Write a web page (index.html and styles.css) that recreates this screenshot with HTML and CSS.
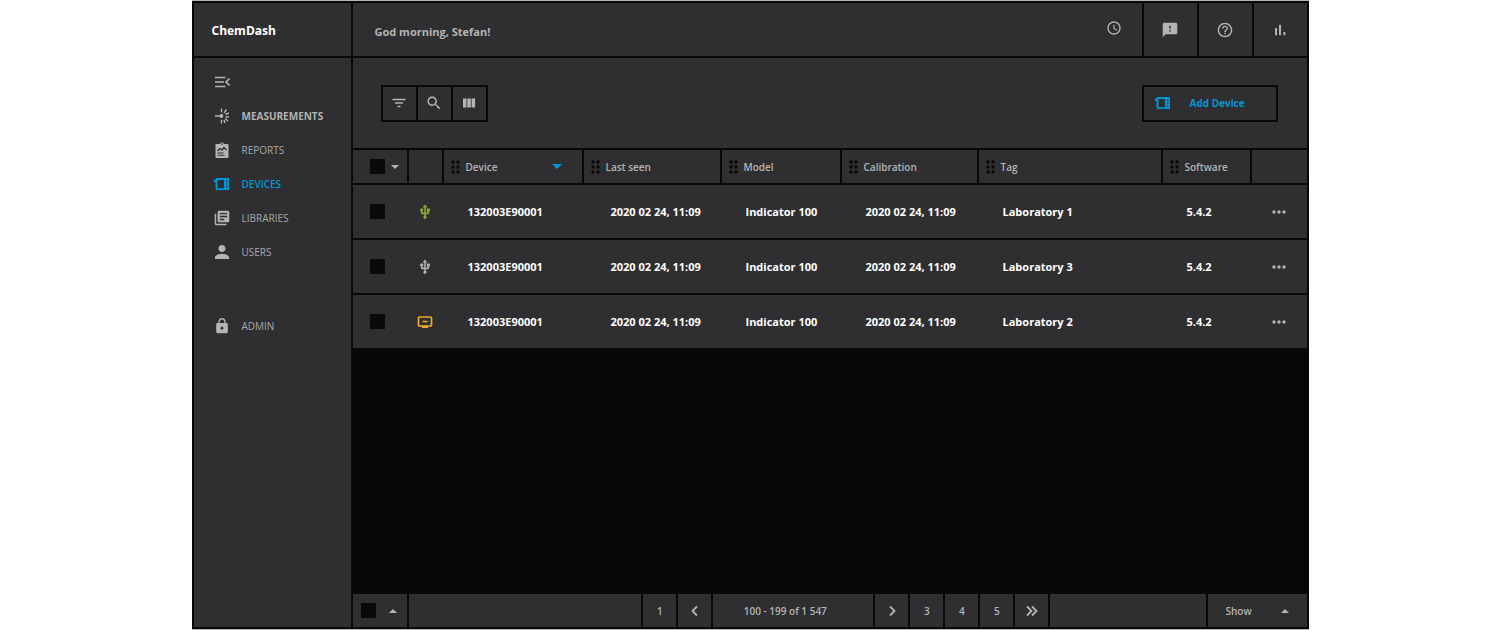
FILE: index.html
```html
<!DOCTYPE html>
<html lang="en">
<head>
<meta charset="utf-8">
<meta name="viewport" content="width=device-width, initial-scale=1">
<title>ChemDash – Devices</title>
<link rel="stylesheet" href="styles.css">
</head>
<body>
<svg class="sprite" aria-hidden="true">
  <symbol id="device" viewBox="0 0 16 14"><path fill="currentColor" fill-rule="evenodd" d="M2 1h13v12H2v-1.500H1.500V5H0V2.500h2zM3.500 3v8.300H10V3z"/><path d="M12.700 3.500v1.500M12.700 6.300v1.500M12.700 9.100v1.500" stroke="#2f2f31" stroke-width="1.200"/></symbol>
  <symbol id="usb" viewBox="0 0 24 24"><path fill="currentColor" stroke="currentColor" stroke-width=".6" d="M15 7v4h1v2h-3V5h2l-3-4-3 4h2v8H8v-2.070c.7-.37 1.200-1.080 1.200-1.930 0-1.210-.99-2.200-2.200-2.200S4.800 7.790 4.800 9c0 .85.5 1.560 1.200 1.930V13c0 1.110.89 2 2 2h3v3.050c-.71.37-1.200 1.100-1.200 1.950 0 1.220.99 2.200 2.200 2.200s2.200-.98 2.200-2.200c0-.85-.49-1.580-1.200-1.950V15h3c1.110 0 2-.89 2-2v-2h1V7h-4z"/></symbol>
  <symbol id="grip" viewBox="0 0 9 14"><g fill="currentColor"><circle cx="2" cy="2" r="1.700"/><circle cx="7" cy="2" r="1.700"/><circle cx="2" cy="7" r="1.700"/><circle cx="7" cy="7" r="1.700"/><circle cx="2" cy="12" r="1.700"/><circle cx="7" cy="12" r="1.700"/></g></symbol>
  <symbol id="down" viewBox="0 0 8 4"><path fill="currentColor" d="M0 0h8L4 4z"/></symbol>
  <symbol id="up" viewBox="0 0 8 4"><path fill="currentColor" d="M0 4h8L4 0z"/></symbol>
  <symbol id="more" viewBox="0 0 14 4"><g fill="currentColor"><circle cx="2" cy="2" r="1.700"/><circle cx="7" cy="2" r="1.700"/><circle cx="12" cy="2" r="1.700"/></g></symbol>
</svg>

<div class="app">
  <div class="brand">ChemDash</div>

  <header class="topbar">
    <div class="greeting">
      <span>God morning, Stefan!</span>
      <button class="history" aria-label="History"><svg class="icon" viewBox="0 0 24 24"><path fill="currentColor" d="M11.990 2C6.470 2 2 6.480 2 12s4.470 10 9.990 10C17.520 22 22 17.520 22 12S17.520 2 11.990 2zM12 20c-4.420 0-8-3.580-8-8s3.580-8 8-8 8 3.580 8 8-3.580 8-8 8zm.8-13H11v6l5 3.300 1-1.500-4.200-2.600z"/></svg></button>
    </div>
    <button class="top-button" aria-label="Feedback"><svg class="icon" viewBox="1 1 22 22"><path fill="currentColor" d="M20 2H4c-1.100 0-2 .9-2 2v18l4-4h14c1.100 0 2-.9 2-2V4c0-1.100-.9-2-2-2zm-7 12h-2v-2h2v2zm0-4h-2V6h2v4z"/></svg></button>
    <button class="top-button" aria-label="Help"><svg class="icon" viewBox="1 1 22 22"><path fill="currentColor" d="M11 18h2v-2h-2v2zm1-16C6.480 2 2 6.480 2 12s4.480 10 10 10 10-4.480 10-10S17.520 2 12 2zm0 18c-4.410 0-8-3.590-8-8s3.590-8 8-8 8 3.590 8 8-3.590 8-8 8zm0-14c-2.210 0-4 1.790-4 4h2c0-1.100.9-2 2-2s2 .9 2 2c0 2-3 1.750-3 5h2c0-2.250 3-2.500 3-5 0-2.210-1.790-4-4-4z"/></svg></button>
    <button class="top-button" aria-label="Statistics"><svg class="icon" viewBox="0 0 24 24"><path fill="currentColor" d="M4.500 9h3v11h-3zM10.500 4h3v16h-3zM17 15h3v5h-3z"/></svg></button>
  </header>

  <nav class="sidebar" aria-label="Main">
    <button class="nav-item" aria-label="Collapse menu"><svg class="icon" viewBox="0 0 16 16"><path d="M1 3.500h10.500M1 8h9M1 12.500h10.500M15.500 4.500 12 8l3.500 3.500" fill="none" stroke="currentColor" stroke-width="1.700"/></svg></button>
    <a class="nav-item strong" href="#measurements"><svg class="icon" viewBox="0 0 16 16"><path d="M1 8h6M7.500.5v3.800M7.500 11.700v3.800M12.500 1.500 10 5M15 5l-3.500 1.500M11.500 9H15M14 13l-2.800-2.300M11 15l-1-3" fill="none" stroke="currentColor" stroke-width="1.400"/><circle cx="7.500" cy="8" r="1.900" fill="currentColor"/></svg>MEASUREMENTS</a>
    <a class="nav-item" href="#reports"><svg class="icon" viewBox="0 0 16 16"><path fill="currentColor" fill-rule="evenodd" d="M2.500 2H6a2.100 2.100 0 0 1 4 0h3.500a1 1 0 0 1 1 1v12a1 1 0 0 1-1 1h-11a1 1 0 0 1-1-1V3a1 1 0 0 1 1-1zM8 1.300a.8.800 0 1 0 0 1.600.8.800 0 0 0 0-1.600zM3.500 10.500v1h6v-1zm0 2.300v1h7v-1z"/><path d="M3.500 9 6 6.500l2 1.500 2-2.500L12.500 8" fill="none" stroke="#2f2f31" stroke-width="1.300"/></svg>REPORTS</a>
    <a class="nav-item active" href="#devices" aria-current="page"><svg class="icon"><use href="#device"/></svg>DEVICES</a>
    <a class="nav-item" href="#libraries"><svg class="icon" viewBox="1 1 22 22"><path fill="currentColor" d="M4 6H2v14c0 1.100.9 2 2 2h14v-2H4V6zm16-4H8c-1.100 0-2 .9-2 2v12c0 1.100.9 2 2 2h12c1.100 0 2-.9 2-2V4c0-1.100-.9-2-2-2zm-1 9H9V9h10v2zm-4 4H9v-2h6v2zm4-8H9V5h10v2z"/></svg>LIBRARIES</a>
    <a class="nav-item" href="#users"><svg class="icon" viewBox="3 3 18 18"><path fill="currentColor" d="M12 12c2.210 0 4-1.790 4-4s-1.790-4-4-4-4 1.790-4 4 1.790 4 4 4zm0 2c-2.670 0-8 1.340-8 4v2h16v-2c0-2.660-5.330-4-8-4z"/></svg>USERS</a>
    <a class="nav-item apart" href="#admin"><svg class="icon" viewBox="1 1 22 22"><path fill="currentColor" d="M18 8h-1V6c0-2.760-2.240-5-5-5S7 3.240 7 6v2H6c-1.100 0-2 .9-2 2v10c0 1.100.9 2 2 2h12c1.100 0 2-.9 2-2V10c0-1.100-.9-2-2-2zm-6 9c-1.100 0-2-.9-2-2s.9-2 2-2 2 .9 2 2-.9 2-2 2zm3.100-9H8.900V6c0-1.710 1.390-3.100 3.100-3.100 1.710 0 3.100 1.390 3.100 3.100v2z"/></svg>ADMIN</a>
  </nav>

  <main class="main">
    <div class="toolbar">
      <div class="tools">
        <button aria-label="Filter"><svg class="icon" viewBox="0 0 16 16"><path d="M1.500 4.500h13M4 8h8M6.500 11.500h3" stroke="currentColor" stroke-width="1.500"/></svg></button>
        <button aria-label="Search"><svg class="icon" viewBox="1 1 22 22"><path fill="currentColor" d="M15.500 14h-.79l-.28-.27C15.410 12.590 16 11.110 16 9.500 16 5.910 13.090 3 9.500 3S3 5.910 3 9.500 5.910 16 9.500 16c1.610 0 3.090-.59 4.230-1.570l.27.28v.79l5 4.990L20.490 19l-4.990-5zm-6 0C7.010 14 5 11.990 5 9.500S7.010 5 9.500 5 14 7.010 14 9.500 11.990 14 9.500 14z"/></svg></button>
        <button aria-label="Columns"><svg class="icon" viewBox="0 0 16 16"><path fill="currentColor" d="M2 3.500h3.500v9H2zM6.300 3.500h3.500v9H6.300zM10.600 3.500h3.500v9h-3.500z"/></svg></button>
      </div>
      <button class="add"><svg class="icon"><use href="#device"/></svg><span>Add Device</span></button>
    </div>

    <table class="devices">
      <colgroup><col class="c-check"><col class="c-state"><col class="c-device"><col class="c-seen"><col class="c-model"><col class="c-calibration"><col class="c-tag"><col class="c-software"><col class="c-more"></colgroup>
      <thead>
        <tr>
          <th><div class="pick"><input type="checkbox" aria-label="Select all"><button class="menu" aria-label="Selection options"><svg class="caret"><use href="#down"/></svg></button></div></th>
          <th></th>
          <th><div class="head"><svg class="grip"><use href="#grip"/></svg>Device<svg class="sort"><use href="#down"/></svg></div></th>
          <th><div class="head"><svg class="grip"><use href="#grip"/></svg>Last seen</div></th>
          <th><div class="head"><svg class="grip"><use href="#grip"/></svg>Model</div></th>
          <th><div class="head"><svg class="grip"><use href="#grip"/></svg>Calibration</div></th>
          <th><div class="head"><svg class="grip"><use href="#grip"/></svg>Tag</div></th>
          <th><div class="head"><svg class="grip"><use href="#grip"/></svg>Software</div></th>
          <th></th>
        </tr>
      </thead>
      <tbody>
        <tr>
          <td class="pick"><input type="checkbox" aria-label="Select Laboratory 1"></td>
          <td class="state online"><svg class="icon"><use href="#usb"/></svg></td>
          <td>132003E90001</td><td class="seen">2020 02 24, 11:09</td><td>Indicator 100</td><td>2020 02 24, 11:09</td><td>Laboratory 1</td><td>5.4.2</td>
          <td class="actions"><button aria-label="More"><svg class="dots"><use href="#more"/></svg></button></td>
        </tr>
        <tr>
          <td class="pick"><input type="checkbox" aria-label="Select Laboratory 3"></td>
          <td class="state"><svg class="icon"><use href="#usb"/></svg></td>
          <td>132003E90001</td><td class="seen">2020 02 24, 11:09</td><td>Indicator 100</td><td>2020 02 24, 11:09</td><td>Laboratory 3</td><td>5.4.2</td>
          <td class="actions"><button aria-label="More"><svg class="dots"><use href="#more"/></svg></button></td>
        </tr>
        <tr>
          <td class="pick"><input type="checkbox" aria-label="Select Laboratory 2"></td>
          <td class="state warning"><svg class="icon" viewBox="0 0 16 16"><path d="M2.500 3h11a1 1 0 0 1 1 1v7a1 1 0 0 1-1 1h-11a1 1 0 0 1-1-1V4a1 1 0 0 1 1-1zM5.500 7.500h5" fill="none" stroke="currentColor" stroke-width="1.700"/><path d="M5 12h6v2H5z" fill="currentColor"/></svg></td>
          <td>132003E90001</td><td class="seen">2020 02 24, 11:09</td><td>Indicator 100</td><td>2020 02 24, 11:09</td><td>Laboratory 2</td><td>5.4.2</td>
          <td class="actions"><button aria-label="More"><svg class="dots"><use href="#more"/></svg></button></td>
        </tr>
      </tbody>
    </table>

    <footer class="pager">
      <div class="pick low"><input type="checkbox" aria-label="Select page"><button class="menu" aria-label="Selection actions"><svg class="caret"><use href="#up"/></svg></button></div>
      <div class="fill wide"></div>
      <button class="page">1</button>
      <button class="page" aria-label="Previous"><svg class="chevron" viewBox="0 0 14 14"><path d="M9 2.500 4.500 7 9 11.500"/></svg></button>
      <div class="range">100 - 199 of 1 547</div>
      <button class="page" aria-label="Next"><svg class="chevron" viewBox="0 0 14 14"><path d="M5 2.500 9.500 7 5 11.500"/></svg></button>
      <button class="page">3</button>
      <button class="page">4</button>
      <button class="page">5</button>
      <button class="page" aria-label="Last"><svg class="chevron" viewBox="0 0 14 14"><path d="M2 2.500 6.500 7 2 11.500M7 2.500l4.500 4.500L7 11.500"/></svg></button>
      <div class="fill"></div>
      <button class="show">Show<svg class="caret"><use href="#up"/></svg></button>
    </footer>
  </main>
</div>
</body>
</html>
```

FILE: styles.css
```css
:root {
  --panel: #2f2f31;
  --line: #08080a;
  --muted: #b4b4b4;
  --accent: #0095d6;
}

* { box-sizing: border-box; }

body {
  margin: 0;
  background: #fff;
  color: var(--muted);
  font: 700 11px/16px "Open Sans", "Noto Sans", sans-serif;
}

.sprite { display: none; }
svg { display: block; flex: none; }
.icon { width: 16px; height: 16px; }

button {
  display: flex;
  align-items: center;
  justify-content: center;
  margin: 0;
  padding: 0;
  border: 0;
  background: var(--panel);
  color: inherit;
  font: inherit;
  cursor: pointer;
}

.app {
  display: grid;
  grid-template: auto 1fr / 157px minmax(0, 1fr);
  gap: 2px;
  max-width: 1117px;
  min-height: 100vh;
  margin: 0 auto;
  padding: 2px;
  border: solid #b5bab8;
  border-width: 1px 0;
  background: var(--line);
}

.brand {
  display: flex;
  align-items: center;
  padding: 2px 18px 0;
  background: var(--panel);
  color: #fff;
  font-size: 12px;
}

/* Top bar */
.topbar { display: flex; gap: 2px; height: 53px; }
.greeting {
  display: flex;
  flex: 1;
  align-items: center;
  justify-content: space-between;
  padding: 0 20px 0 22px;
  background: var(--panel);
}
.greeting span { padding-top: 4px; }
.history { padding-bottom: 4px; }
.top-button { width: 53px; }

/* Sidebar */
.sidebar { padding: 7px 0; background: var(--panel); }
.nav-item {
  display: flex;
  align-items: center;
  justify-content: flex-start;
  gap: 12px;
  width: 100%;
  height: 34px;
  padding-left: 20px;
  color: #a8a8a8;
  font-size: 10px;
  font-weight: 400;
  text-decoration: none;
}
.nav-item .icon { color: var(--muted); }
.strong { color: var(--muted); font-weight: 700; }
.active { color: var(--accent); font-weight: 600; }
.active .icon { color: var(--accent); }
.apart { margin-top: 40px; }

/* Content */
.main { display: flex; flex-direction: column; min-width: 0; }
.toolbar {
  display: flex;
  align-items: center;
  justify-content: space-between;
  height: 90px;
  padding: 0 29px 0 28px;
  background: var(--panel);
}
.tools { display: flex; gap: 2px; padding: 2px; background: var(--line); }
.tools button { width: 33px; height: 33px; }
.add {
  justify-content: flex-start;
  gap: 19px;
  width: 136px;
  height: 37px;
  padding: 0 11px;
  border: 2px solid var(--line);
  color: var(--accent);
  font-size: 10px;
}

/* Table */
.devices { width: 100%; border-spacing: 0; table-layout: fixed; }
.c-check { width: 56px; }
.c-state { width: 35px; }
.c-device { width: 140px; }
.c-seen { width: 138px; }
.c-model { width: 120px; }
.c-calibration { width: 137px; }
.c-software { width: 89px; }
.c-more { width: 55px; }
th, td { padding: 0; background: var(--panel); text-align: left; white-space: nowrap; }
th {
  height: 35px;
  border-top: 2px solid var(--line);
  border-right: 2px solid var(--line);
  font-size: 10px;
  font-weight: 600;
}
th:last-child { border-right: 0; }
td {
  height: 55px;
  padding-left: 24px;
  border-top: 2px solid var(--line);
  color: #fff;
}
.head { display: flex; align-items: center; padding-left: 7px; }
.grip { width: 9px; height: 14px; margin-right: 6px; color: var(--line); }
.sort { width: 10px; height: 5px; margin: 0 20px 0 auto; color: var(--accent); }
.caret { width: 8px; height: 4px; }

div.pick { display: flex; align-items: center; gap: 3px; padding-left: 17px; }
td.pick { padding-left: 17px; }
.menu { width: 15px; height: 20px; }
input[type="checkbox"] {
  appearance: none;
  display: block;
  flex: none;
  width: 15px;
  height: 15px;
  margin: 0;
  background: #0a0a0c;
}
input[type="checkbox"]:checked { background: var(--accent); }

.seen { padding-left: 27px; }
.state { padding-left: 8px; color: var(--muted); }
.online { color: #8dad30; }
.warning { color: #efa92c; }
.actions { padding: 0; color: var(--muted); }
.actions button { width: 100%; height: 20px; }
.dots { width: 14px; height: 4px; }

/* Pager */
.pager { display: flex; gap: 2px; height: 33px; margin-top: auto; font-size: 10px; font-weight: 600; }
.pager > * { background: var(--panel); }
.pager .low { gap: 10px; width: 54px; padding-left: 8px; }
.fill { flex: 2; }
.wide { flex: 3; }
.page { width: 33px; }
.range { display: flex; align-items: center; justify-content: center; width: 160px; padding-right: 16px; }
.show { justify-content: space-between; width: 99px; padding: 0 18px; }
.chevron { width: 14px; height: 14px; fill: none; stroke: currentColor; stroke-width: 1.800; }
```
